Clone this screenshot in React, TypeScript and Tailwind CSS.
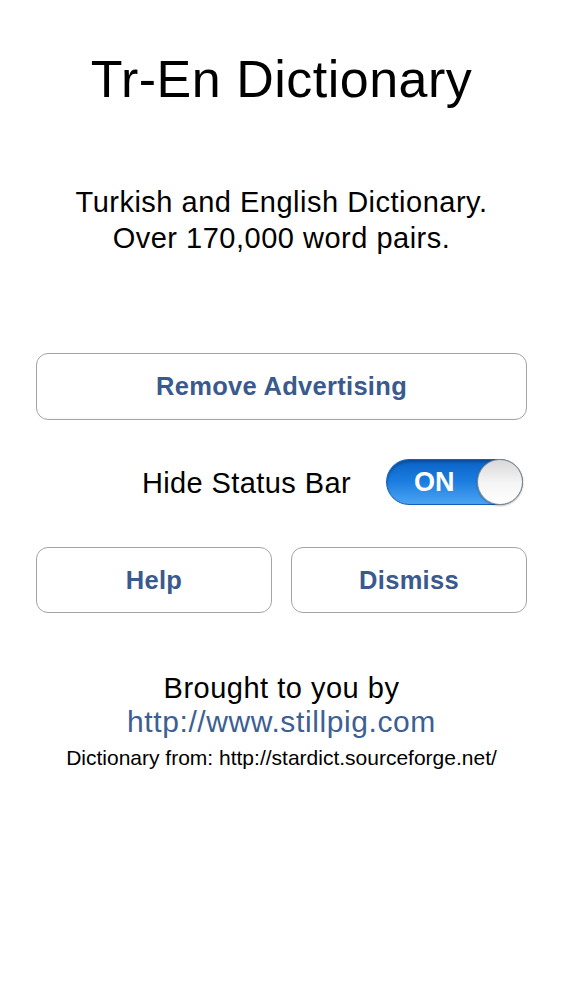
export default function App() {
  const font = { fontFamily: '"Liberation Sans", Arial, sans-serif' };
  return (
    <div
      className="w-[563px] h-[1000px] bg-white flex flex-col items-center text-black"
      style={font}
    >
      <h1 className="pt-[49px] text-[52px] leading-[60px] font-normal tracking-[0.5px]">
        Tr-En Dictionary
      </h1>

      <p className="mt-[75px] text-[29px] leading-[36px] text-center tracking-[0.5px]">
        Turkish and English Dictionary.
        <br />
        Over 170,000 word pairs.
      </p>

      <button
        type="button"
        className="mt-[97px] w-[491px] h-[67px] rounded-[12px] border-[1.5px] border-[#a4a4a4] bg-white text-[25.5px] font-bold text-[#3a5a8d] tracking-[0.3px] shadow-[inset_0_-1px_2px_rgba(0,0,0,0.04)]"
      >
        Remove Advertising
      </button>

      <div className="mt-[37px] w-[491px] flex items-center justify-end gap-[35px] pr-[4px]">
        <span className="text-[29px] leading-[46px] pt-[3px] tracking-[0.4px]">Hide Status Bar</span>
        <div className="relative w-[137px] h-[46px] rounded-full bg-gradient-to-b from-[#0b62c6] via-[#1c7ee0] to-[#4aa4f2] border border-[#1460b8] shadow-[inset_0_2px_3px_rgba(0,0,0,0.25)]">
          <span className="absolute left-[27px] top-0 leading-[44px] text-[27px] font-bold text-white">
            ON
          </span>
          <div className="absolute right-[-1px] top-[-1px] w-[46px] h-[46px] rounded-full border border-[#8a8a8a] bg-gradient-to-b from-[#d8d8d8] via-[#f4f4f4] to-[#ffffff] shadow-[0_1px_2px_rgba(0,0,0,0.3)]" />
        </div>
      </div>

      <div className="mt-[41px] w-[491px] flex gap-[19px]">
        <button
          type="button"
          className="flex-1 h-[66px] rounded-[12px] border-[1.5px] border-[#a4a4a4] bg-white text-[25.5px] font-bold text-[#3a5a8d] tracking-[0.3px]"
        >
          Help
        </button>
        <button
          type="button"
          className="flex-1 h-[66px] rounded-[12px] border-[1.5px] border-[#a4a4a4] bg-white text-[25.5px] font-bold text-[#3a5a8d] tracking-[0.3px]"
        >
          Dismiss
        </button>
      </div>

      <div className="mt-[58px] flex flex-col items-center">
        <p className="text-[29px] leading-[34px] tracking-[0.5px]">Brought to you by</p>
        <a className="text-[30px] leading-[34px] text-[#3d5f93] tracking-[0.6px]">
          http://www.stillpig.com
        </a>
        <p className="mt-[5px] text-[21px] leading-[28px]">
          Dictionary from: http://stardict.sourceforge.net/
        </p>
      </div>
    </div>
  );
}
